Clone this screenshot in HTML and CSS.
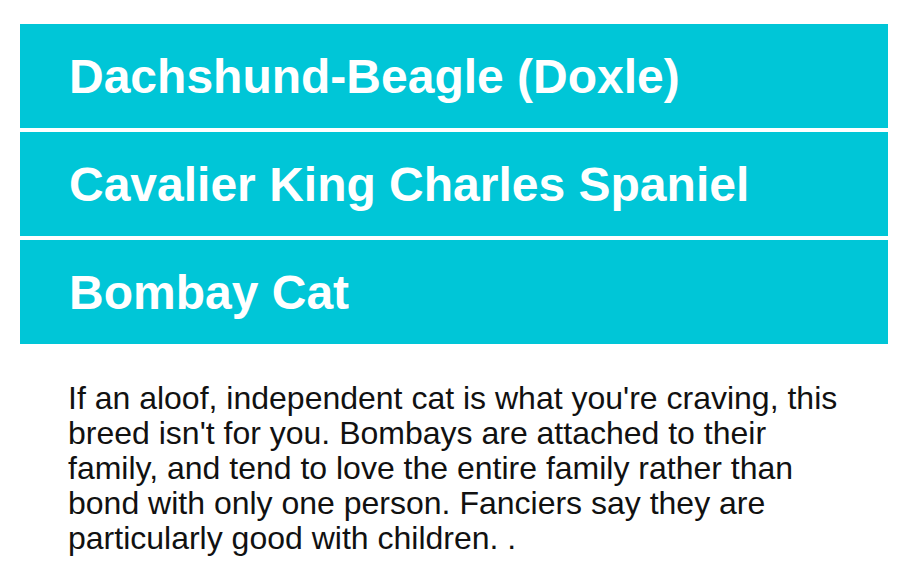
FILE: index.html
```html
<!DOCTYPE html>
<html lang="en">
<head>
  <meta charset="UTF-8" />
  <title>Breeds</title>
  <link rel="stylesheet" href="styles.css">
</head>
<body>

  <!-- Breed accordion -->
  <div class="accordion">
    <div class="accordion-title">Dachshund-Beagle (Doxle)</div>
    <div class="accordion-title">Cavalier King Charles Spaniel</div>
    <div class="accordion-title open">Bombay Cat</div>
    <div class="accordion-panel">
      <p>If an aloof, independent cat is what you're craving, this breed isn't for you. Bombays are attached to their family, and tend to love the entire family rather than bond with only one person. Fanciers say they are particularly good with children. .</p>
    </div>
  </div>

</body>
</html>
```

FILE: styles.css
```css
body {
  font-family: "Liberation Sans", Arial, sans-serif;
  background: #fff;
  margin: 0;
  padding: 24px 18px 0 20px;
}

.accordion {
  display: flex;
  flex-direction: column;
  gap: 4px;
}

.accordion-title {
  display: flex;
  align-items: center;
  height: 104px;
  padding-left: 49px;
  background-color: #00c6d7;
  color: #fff;
  font-size: 48px;
  font-weight: bold;
}

.accordion-panel {
  padding: 33px 48px 0 48px;
}

.accordion-panel p {
  margin: 0;
  font-size: 32px;
  line-height: 35px;
  color: #111;
}
```
